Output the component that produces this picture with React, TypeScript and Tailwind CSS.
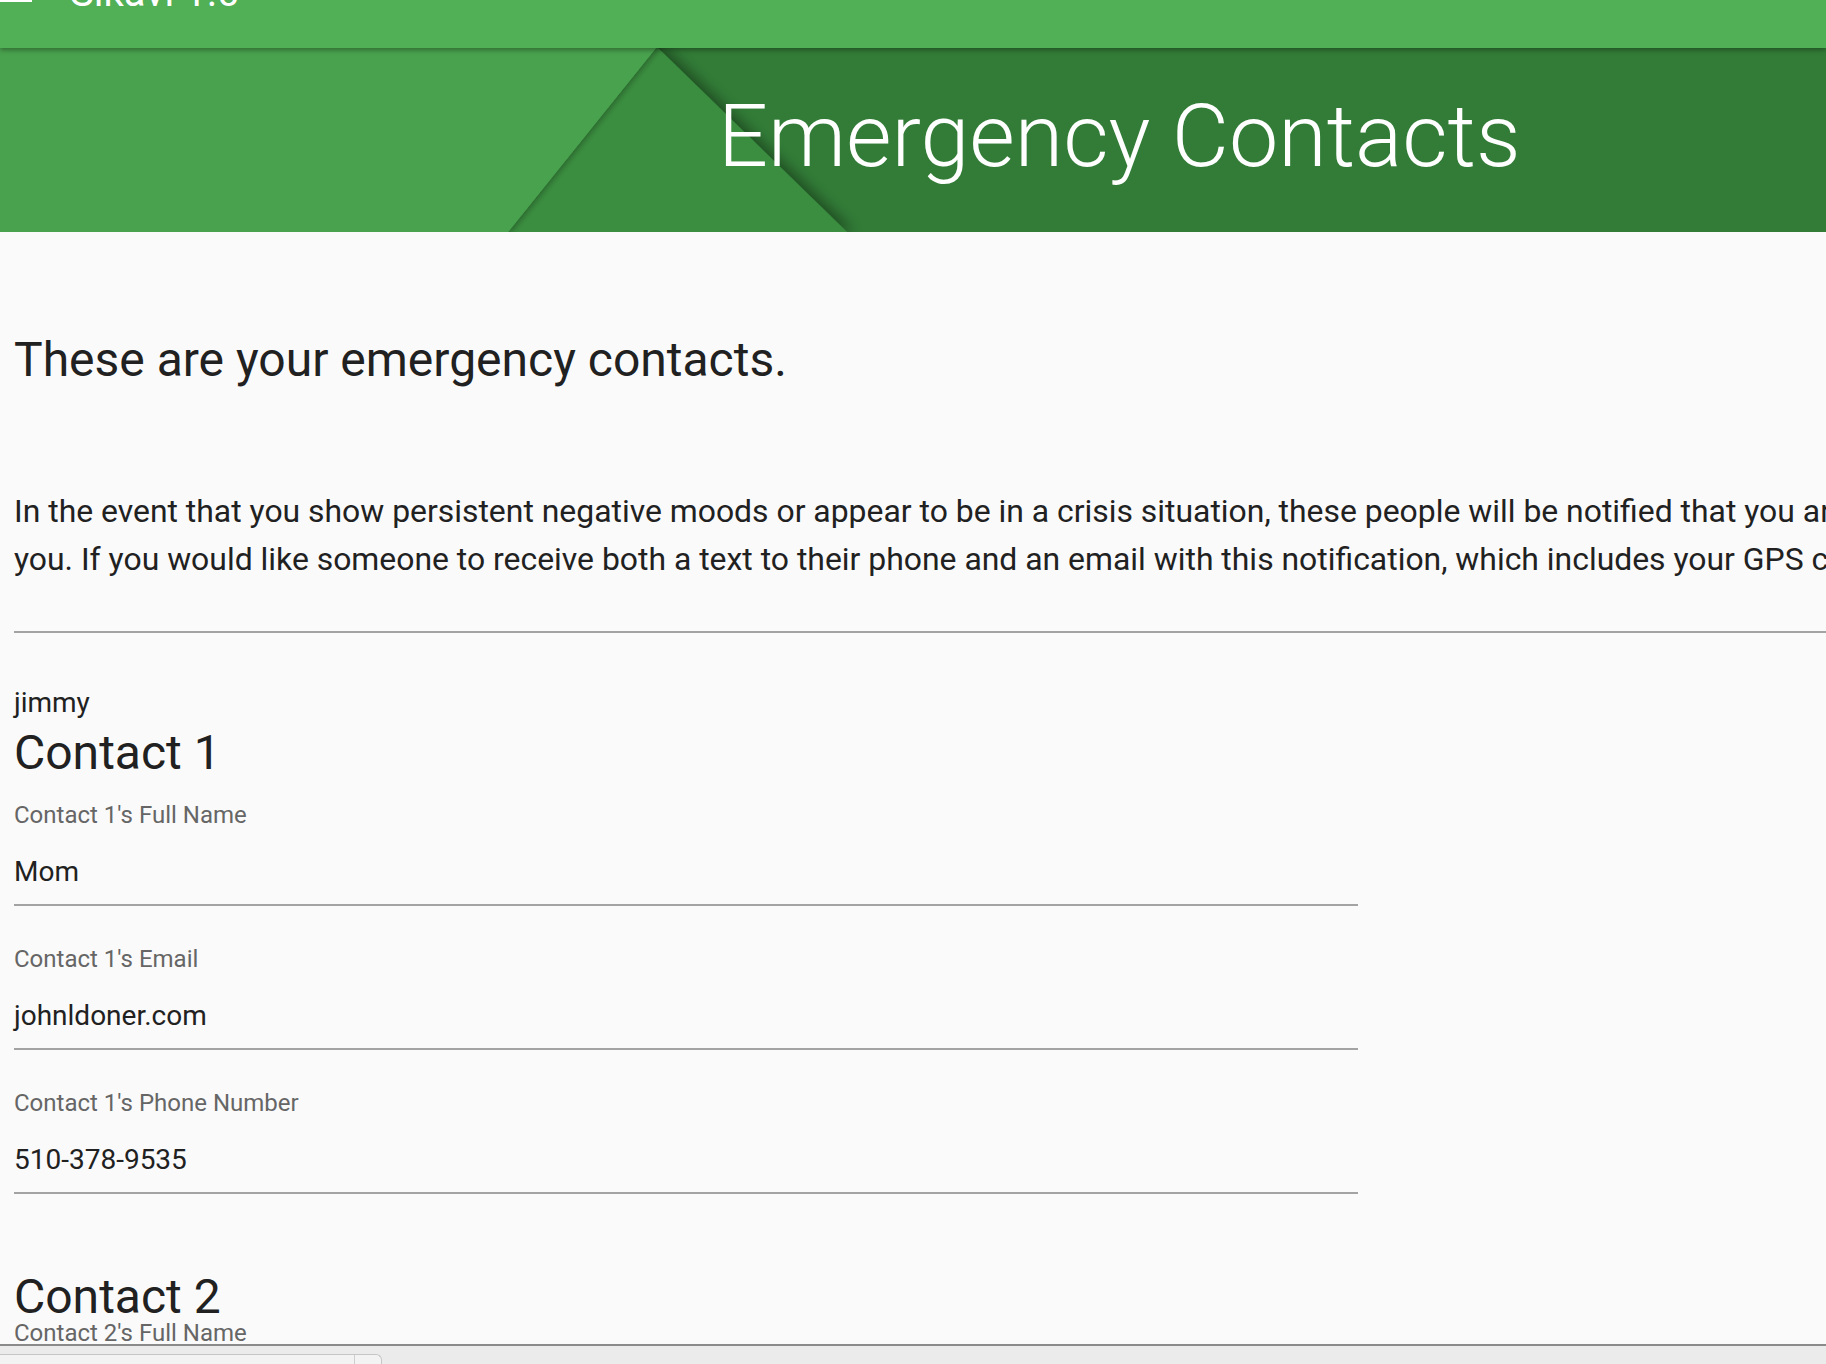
import React from "react";

const font = "font-['Roboto','Liberation_Sans',sans-serif]";

function Field({ label, value, first }: { label: string; value: string; first?: boolean }) {
  return (
    <div className={`${first ? "pt-[26px]" : "pt-[41px]"} w-[1344px] border-b-2 border-[#a3a3a3]`}>
      <div className="text-[24px] leading-[24px] text-[#666666]">{label}</div>
      <div className="mt-[29px] pb-[16px] text-[28px] leading-[32px] text-[#212121]">{value}</div>
    </div>
  );
}

export default function App() {
  return (
    <div className={`${font} w-full h-[1364px] overflow-hidden flex flex-col bg-[#fafafa]`}>
      <div className="flex-1 min-h-0 overflow-hidden flex flex-col">
        {/* top app bar (scrolled, only bottom part visible) */}
        <div className="relative z-10 h-[48px] shrink-0 bg-[#51af56] shadow-[0_2px_5px_rgba(0,0,0,0.35)] overflow-hidden flex items-start">
          <div className="w-[32px] -mt-[2px] h-[4px] bg-white" />
          <div className="ml-[38px] -mt-[27px] text-[40px] leading-[40px] text-white whitespace-nowrap">Sikavi 1.0</div>
        </div>

        {/* hero header */}
        <div className="relative h-[184px] shrink-0 overflow-hidden">
          <svg className="absolute inset-0" width="1826" height="184" viewBox="0 0 1826 184">
            <defs>
              <filter id="sh1" x="-20%" y="-20%" width="140%" height="140%">
                <feDropShadow dx="7" dy="0" stdDeviation="7" floodColor="#000" floodOpacity="0.4" />
              </filter>
              <filter id="sh2" x="-20%" y="-20%" width="140%" height="140%">
                <feDropShadow dx="3" dy="0" stdDeviation="3" floodColor="#000" floodOpacity="0.3" />
              </filter>
            </defs>
            <rect x="0" y="0" width="1826" height="184" fill="#327c37" />
            <polygon points="658,0 847,184 508,184 300,0" fill="#3b8e41" filter="url(#sh1)" />
            <polygon points="-20,-20 672,-20 508,184 -20,204" fill="#49a24e" filter="url(#sh2)" />
            <polygon points="-20,-20 672,-20 508,184 -20,204" fill="#49a24e" />
          </svg>
          <div className="relative pl-[718px] pt-[44px] text-[88px] leading-[88px] font-light text-white whitespace-nowrap">
            Emergency Contacts
          </div>
        </div>

        {/* content */}
        <div className="pl-[14px] pt-[104px] text-[#212121]">
          <div className="text-[48px] leading-[48px] whitespace-nowrap">These are your emergency contacts.</div>
          <div className="mt-[103px] text-[31.9px] leading-[48px] whitespace-nowrap">
            <div>
              In the event that you show persistent negative moods or appear to be in a crisis situation, these people will be notified that you are in need of support and will be asked to reach out to
            </div>
            <div>
              you. If you would like someone to receive both a text to their phone and an email with this notification, which includes your GPS coordinates, please enter both their phone number and email address below.
            </div>
          </div>
          <div className="mt-[48px] h-[2px] bg-[#a3a3a3]" />
          <div className="mt-[50px] text-[28px] leading-[40px]">jimmy</div>
          <div className="mt-[6px] text-[48px] leading-[48px]">Contact 1</div>
          <Field first label="Contact 1's Full Name" value="Mom" />
          <Field label="Contact 1's Email" value="johnldoner.com" />
          <Field label="Contact 1's Phone Number" value="510-378-9535" />
          <div className="mt-[79px] text-[48px] leading-[48px]">Contact 2</div>
          <div className="text-[24px] leading-[24px] text-[#666666]">Contact 2's Full Name</div>
        </div>
      </div>

      {/* horizontal scrollbar */}
      <div className="h-[20px] shrink-0 border-t-2 border-[#8a8a8a] bg-[#ebebeb] flex items-end">
        <div className="w-[382px] h-[10px] rounded-tr-[6px] border-t border-r border-[#c6c6c6] bg-[#f3f3f3] flex justify-end">
          <div className="w-[27px] h-full border-l border-[#cfcfcf]" />
        </div>
      </div>
    </div>
  );
}
